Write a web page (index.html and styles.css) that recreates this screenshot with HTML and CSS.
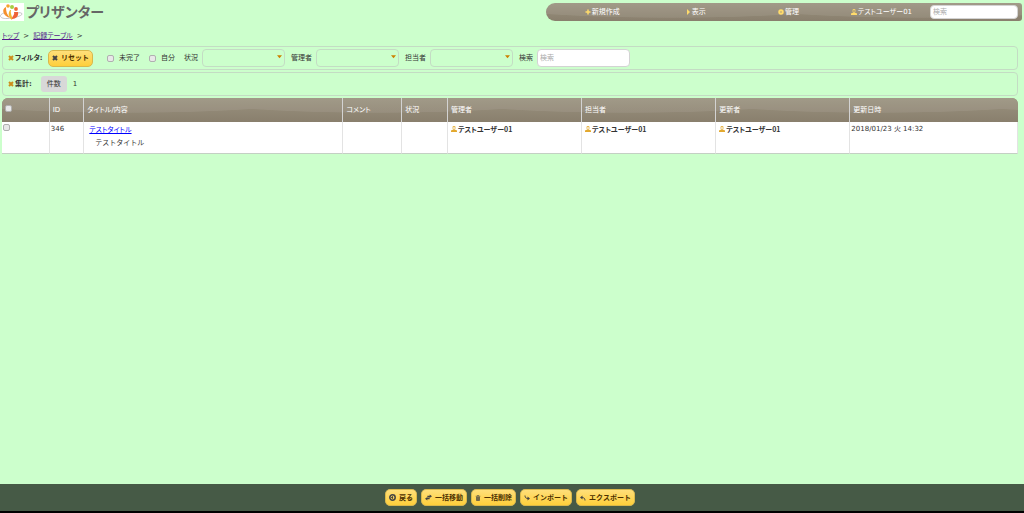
FILE: index.html
```html
<!DOCTYPE html>
<html lang="ja">

<head>
  <meta charset="UTF-8">
  <meta name="viewport" content="width=device-width, initial-scale=1.0">
  <title>記録テーブル - プリザンター</title>
  <link rel="stylesheet" href="styles.css">
</head>

<body>

  <!-- shared icons -->
  <svg class="icon-defs" width="0" height="0" aria-hidden="true">
    <symbol id="icon-person" viewBox="0 0 12 12">
      <path fill="none" stroke="currentColor" stroke-width="1.600" d="M4 1h4v4l-1 2H5L4 5z" />
      <path fill="currentColor" d="M0 12V9l3-1.500h6L12 9v3z" />
    </symbol>
    <symbol id="icon-close" viewBox="0 0 12 12">
      <path fill="none" stroke="currentColor" stroke-width="4" d="M2 2l8 8M10 2l-8 8" />
    </symbol>
    <symbol id="icon-down" viewBox="0 0 12 12">
      <path fill="currentColor" d="M0 3h12L6 10z" />
    </symbol>
  </svg>

  <!-- header area -->
  <header class="header">
    <a href="#" class="brand">
      <svg class="logo" viewBox="0 0 24 18" aria-hidden="true">
        <rect width="24" height="18" fill="#fff" />
        <path d="M4 10C-2 12 0 16 7 15.500C14 15 22 13 22 11C22 9.500 19 9.500 17 10" fill="none" stroke="#b9b9b9" stroke-width=".8" />
        <path d="M6 4C1 6 3 13 10 15C7 11 6 9 6 4z" fill="#f5902d" />
        <path d="M10 7C8 10 8 14 12 17C13 14 10 11 11 7z" fill="#f2b632" />
        <path d="M18 9C19 13 16 16 12 16C12 13 15 12 14 9z" fill="#ee6238" />
        <circle cx="8" cy="3" r="1.800" fill="#f5a52d" />
        <circle cx="12" cy="4" r="2" fill="#a5cf43" />
        <circle cx="16" cy="6" r="1.900" fill="#ef6a3a" />
      </svg>
      <span class="brand-name">プリザンター</span>
    </a>
    <nav class="navbar">
      <ul class="nav-menu">
        <li><a href="#" class="nav-link"><svg class="icon" viewBox="0 0 12 12"><path fill="none" stroke="currentColor" stroke-width="3" d="M6 1v10M1 6h10" /></svg>新規作成</a></li>
        <li><a href="#" class="nav-link"><svg class="icon" viewBox="0 0 12 12"><path fill="currentColor" d="M4 0l6 6-6 6z" /></svg>表示</a></li>
        <li><a href="#" class="nav-link"><svg class="icon" viewBox="0 0 12 12"><circle cx="6" cy="6" r="3.500" fill="none" stroke="currentColor" stroke-width="4" /></svg>管理</a></li>
        <li><a href="#" class="nav-link narrow"><svg class="icon"><use href="#icon-person" /></svg>テストユーザー01</a></li>
      </ul>
      <input type="text" class="text-box nav-search" placeholder="検索" aria-label="検索">
    </nav>
  </header>

  <!-- breadcrumb -->
  <nav class="breadcrumb narrow">
    <a href="#">トップ</a><span>&gt;</span><a href="#">記録テーブル</a><span>&gt;</span>
  </nav>

  <main class="main">

    <!-- filter area -->
    <form class="panel filter">
      <span class="panel-title narrow"><svg class="icon"><use href="#icon-close" /></svg>フィルタ:</span>
      <button type="button" class="button reset"><svg class="icon"><use href="#icon-close" /></svg>リセット</button>
      <label class="check"><input type="checkbox" class="checkbox">未完了</label>
      <label class="check"><input type="checkbox" class="checkbox">自分</label>
      <label class="field first">状況
        <span class="select-wrap"><select class="select"><option></option></select><svg class="arrow"><use href="#icon-down" /></svg></span>
      </label>
      <label class="field">管理者
        <span class="select-wrap"><select class="select"><option></option></select><svg class="arrow"><use href="#icon-down" /></svg></span>
      </label>
      <label class="field">担当者
        <span class="select-wrap"><select class="select"><option></option></select><svg class="arrow"><use href="#icon-down" /></svg></span>
      </label>
      <label class="field">検索
        <input type="text" class="text-box filter-search" placeholder="検索">
      </label>
    </form>

    <!-- aggregation area -->
    <div class="panel">
      <span class="panel-title"><svg class="icon"><use href="#icon-close" /></svg>集計:</span>
      <span class="count-label">件数</span>
      <span>1</span>
    </div>

    <!-- record list -->
    <table class="grid">
      <colgroup>
        <col class="col-check">
        <col class="col-id">
        <col class="col-title">
        <col class="col-comment">
        <col class="col-status">
        <col class="col-user">
        <col class="col-user">
        <col class="col-user">
        <col class="col-date">
      </colgroup>
      <thead>
        <tr>
          <th><input type="checkbox" class="checkbox" aria-label="すべて選択"></th>
          <th>ID</th>
          <th class="narrow">タイトル/内容</th>
          <th class="narrow">コメント</th>
          <th>状況</th>
          <th>管理者</th>
          <th>担当者</th>
          <th>更新者</th>
          <th>更新日時</th>
        </tr>
      </thead>
      <tbody>
        <tr>
          <td><input type="checkbox" class="checkbox" aria-label="選択"></td>
          <td>346</td>
          <td>
            <div class="record">
              <a href="#" class="record-link narrow">テストタイトル</a>
              <p class="record-body">テストタイトル</p>
            </div>
          </td>
          <td></td>
          <td></td>
          <td><span class="user narrow"><svg class="icon"><use href="#icon-person" /></svg>テストユーザー01</span></td>
          <td><span class="user narrow"><svg class="icon"><use href="#icon-person" /></svg>テストユーザー01</span></td>
          <td><span class="user narrow"><svg class="icon"><use href="#icon-person" /></svg>テストユーザー01</span></td>
          <td>2018/01/23 火 14:32</td>
        </tr>
      </tbody>
    </table>
  </main>

  <!-- command buttons -->
  <footer class="commands">
    <button type="button" class="button"><svg class="icon icon-large" viewBox="0 0 12 12"><circle cx="6" cy="6" r="4.600" fill="none" stroke="currentColor" stroke-width="2.600" /><path fill="currentColor" d="M3 6l4-3v6z" /></svg>戻る</button>
    <button type="button" class="button"><svg class="icon icon-large" viewBox="0 0 12 12"><path fill="currentColor" d="M4 3h4V1l4 3-4 3V5.500H4zM8 9H4v2L0 8l4-3v1.500h4z" /></svg>一括移動</button>
    <button type="button" class="button"><svg class="icon" viewBox="0 0 12 12"><path fill="none" stroke="currentColor" stroke-width="1.500" d="M1.500 2.500h9M4.500 1h3M3 4v7h6V4M5 4v6M7 4v6" /></svg>一括削除</button>
    <button type="button" class="button"><svg class="icon" viewBox="0 0 12 12"><path fill="none" stroke="currentColor" stroke-width="2" d="M2 1c0 4 2 6 6 6" /><path fill="currentColor" d="M7 3l5 4-5 4z" /></svg>インポート</button>
    <button type="button" class="button"><svg class="icon" viewBox="0 0 12 12"><path fill="none" stroke="currentColor" stroke-width="2" d="M4 5c4 0 6 2 6 6" /><path fill="currentColor" d="M5 1L0 5l5 4z" /></svg>エクスポート</button>
  </footer>

</body>

</html>
```

FILE: styles.css
```css
* {
  box-sizing: border-box;
}

body {
  display: flex;
  flex-direction: column;
  min-height: 100vh;
  margin: 0;
  background-color: #cfc;
  color: #333;
  font-family: "DejaVu Sans", "Noto Sans CJK JP", sans-serif;
  font-size: 7px;
  line-height: 10px;
}

button,
input,
select {
  font: inherit;
  color: inherit;
}

.icon-defs {
  position: absolute;
}

.icon {
  flex: none;
  width: 6px;
  height: 6px;
}

.icon-large {
  width: 7px;
  height: 7px;
}

/* proportional kana */
.narrow {
  font-feature-settings: "palt";
}

/* header */
.header {
  display: flex;
  justify-content: space-between;
  align-items: center;
  height: 24px;
  padding-right: 2px;
}

.brand {
  display: flex;
  align-items: center;
  gap: 2px;
  color: #666;
  text-decoration: none;
}

.logo {
  width: 24px;
  height: 18px;
}

.brand-name {
  font-size: 14px;
  line-height: 20px;
  font-weight: bold;
  font-feature-settings: "palt";
}

/* glossy brown bar */
.navbar,
.grid thead {
  background-color: #928a77;
  background-image: radial-gradient(190px 15px at 50% 0, #ffffff12 96%, #ffffff00 100%), linear-gradient(#9a927f, #897f6d);
  background-size: 250px 100%, 100% 100%;
}

.navbar {
  display: flex;
  align-items: center;
  gap: 2px;
  width: 46.6%;
  height: 18px;
  padding: 0 4px 0 10px;
  border-radius: 9px 3px 3px 9px;
}

.nav-menu {
  display: flex;
  flex: 1;
  margin: 0;
  padding: 0;
  list-style: none;
}

.nav-menu li {
  flex: 1;
}

.nav-link {
  display: flex;
  justify-content: center;
  align-items: center;
  gap: 1px;
  color: #fff;
  text-decoration: none;
}

.nav-link .icon {
  color: #ffdb6b;
}

/* inputs */
.text-box {
  padding: 0 2px;
  border: 1px solid #d3d3d3;
  border-radius: 4px;
  background-color: #fff;
}

.text-box::placeholder {
  color: #aaa;
}

.nav-search {
  width: 88px;
  height: 14px;
}

.checkbox {
  appearance: none;
  width: 7px;
  height: 7px;
  margin: 0;
  border: 1px solid #b0b0b0;
  border-radius: 2px;
  background-color: #e8e8e8;
  vertical-align: top;
}

.button {
  display: flex;
  align-items: center;
  gap: 3px;
  height: 17px;
  padding: 0 3px;
  border: 1px solid #d9b84a;
  border-radius: 5px;
  background-image: linear-gradient(#ffdf7a, #fecf3b);
  color: #4c3000;
  font-weight: bold;
}

.button .icon {
  color: #444;
}

/* breadcrumb */
.breadcrumb {
  display: flex;
  gap: 4px;
  margin: 7px 2px 5px;
}

.breadcrumb a {
  color: #551a8b;
}

/* filter and aggregation panels */
.main {
  flex: 1;
  padding: 0 6px 0 2px;
}

.panel {
  display: flex;
  align-items: center;
  height: 24px;
  margin-bottom: 2px;
  padding-left: 5px;
  border: 1px solid #c4dcc4;
  border-radius: 4px;
  white-space: nowrap;
}

.panel-title {
  display: flex;
  align-items: center;
  gap: 1px;
  font-weight: bold;
}

.panel-title .icon {
  color: #cd8e1a;
}

.filter .panel-title {
  width: 40px;
}

.reset {
  width: 45px;
  margin-right: 5px;
}

.check {
  display: flex;
  align-items: center;
  gap: 5px;
  margin-left: 9px;
}

.field {
  display: flex;
  align-items: center;
  gap: 4px;
  margin-left: 6px;
}

.field.first {
  margin-left: 9px;
}

.select-wrap {
  position: relative;
  display: flex;
}

.select {
  appearance: none;
  width: 83px;
  height: 18px;
  border: 1px solid #c4dcc4;
  border-radius: 4px;
  background-color: transparent;
}

.arrow {
  position: absolute;
  top: 5px;
  right: 3px;
  width: 5px;
  height: 5px;
  color: #cd8000;
  pointer-events: none;
}

.filter-search {
  width: 93px;
  height: 18px;
}

.count-label {
  margin: 0 6px 0 9px;
  padding: 3px 6px;
  border-radius: 3px;
  background-color: #d8d8d8;
}

/* record list */
.grid {
  width: 100%;
  table-layout: fixed;
  border-collapse: separate;
  border-spacing: 0;
  border-radius: 6px 6px 0 0;
  overflow: hidden;
}

.col-check {
  width: 4.7%;
}

.col-id {
  width: 3.4%;
}

.col-title {
  width: 25.5%;
}

.col-comment {
  width: 5.8%;
}

.col-status {
  width: 4.5%;
}

.col-user {
  width: 13.2%;
}

.grid th {
  height: 24px;
  padding: 0 3px;
  border-right: 1px solid #d3d3d3;
  color: #fff;
  font-weight: normal;
  text-align: left;
}

.grid th:last-child {
  border-right: 0;
}

.grid td {
  height: 32px;
  padding: 2px 1px;
  border-right: 1px solid #e3e3e3;
  border-bottom: 1px solid #c4d0c4;
  background-color: #fff;
  vertical-align: top;
}

.record {
  padding: 1px 4px;
}

.record-link {
  color: #00f;
}

.record-body {
  margin: 3px 0 0 6px;
}

.user {
  display: flex;
  align-items: center;
  gap: 1px;
  padding-left: 2px;
  font-family: "Noto Sans CJK JP", sans-serif;
  font-weight: bold;
}

.user .icon {
  color: #e3a92f;
}

/* command buttons */
.commands {
  display: flex;
  justify-content: center;
  align-items: center;
  gap: 4px;
  height: 29px;
  padding-right: 4px;
  border-bottom: 2px solid #000;
  background-color: #465a46;
}
```
